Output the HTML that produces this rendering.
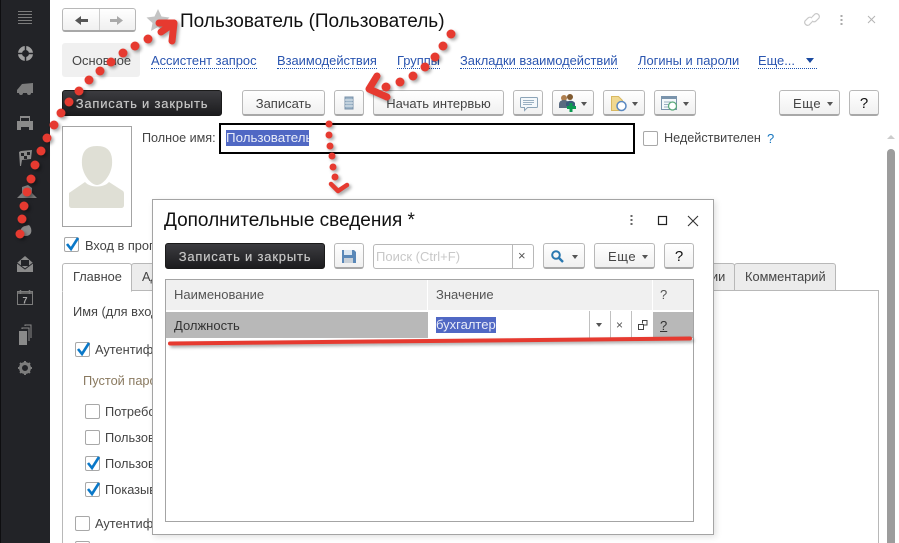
<!DOCTYPE html>
<html lang="ru"><head><meta charset="utf-8"><title>Пользователь</title>
<style>
html,body{margin:0;padding:0;width:899px;height:543px;overflow:hidden;background:#fff}
#w{position:absolute;left:0;top:0;width:899px;height:543px;overflow:hidden;background:#fff;font-family:"Liberation Sans",sans-serif;font-size:12.8px;color:#333}
.a{position:absolute;white-space:nowrap}
.b{position:absolute;box-sizing:border-box;height:26px;top:90px;border:1px solid #b8b8b8;border-bottom:2px solid #a8a8a8;border-radius:3px;background:linear-gradient(#fff,#f0f0f0);text-align:center;line-height:25px;font-size:13px;color:#444;white-space:nowrap}
.e{letter-spacing:.6px}
.d{background:linear-gradient(#3c3c40,#1c1c1e);border:1px solid #1a1a1a;color:#c4c4c4;letter-spacing:.8px;text-shadow:0 0 .5px #bbb}
.l{position:absolute;top:53px;color:#2a55b0;font-size:12.9px;white-space:nowrap;border-bottom:1px dotted #1a50b0;line-height:15px}
.tri{position:absolute;width:0;height:0;border-left:3.5px solid transparent;border-right:3.5px solid transparent;border-top:4px solid #555}
.c{position:absolute;box-sizing:border-box;width:15px;height:15px;border:1px solid #a8a8a8;border-radius:2px;background:#fff}
.t{position:absolute;box-sizing:border-box;top:263px;height:28px;background:#ececec;border:1px solid #b8b8b8;border-radius:3px 3px 0 0;line-height:26px;font-size:12.8px;color:#444;padding-left:10px;white-space:nowrap}
svg{position:absolute;left:0;top:0;overflow:visible}
</style></head><body><div id="w">

<div class="a" style="left:0;top:0;width:50px;height:543px;background:#222327;border-left:1px solid #0e0e10;box-sizing:border-box"></div>
<svg width="50" height="400">
<g stroke="#7c7c7c" stroke-width="1"><path d="M18 11.500h14M18 14.500h14M18 17.500h14M18 20.500h14M18 23.500h14"/></g>
<circle cx="25.500" cy="53.500" r="5.500" fill="none" stroke="#a0a0a0" stroke-width="4"/><path d="M25.500 45v17M17 53.500h17" stroke="#222327" stroke-width="1.500"/>
<path d="M17 90l5-6 11-1v10h-2a2 2 0 0 1-4 0h-4a2 2 0 0 1-4 0h-2z" fill="#7c7c7c"/>
<path d="M20 116h10v5h3v9h-16v-9h3z" fill="#8a8a8a"/><path d="M21 118h8v3h-8z" fill="#222327"/><path d="M21 127h8v3h-8z" fill="#222327"/>
<path d="M19 152l2-1 11-1-1 9-9 1-1 6-1 0z" fill="#8a8a8a"/><path d="M21 153l3 0v3h-3zM27 152l3 0v3h-3zM24 156l3 0v3h-3z" fill="#222327"/>
<path d="M17 198l5-5 0-6 6-2 4 3 0 5 5 5z" fill="#7c7c7c"/>
<path d="M20 233a6 7 0 0 1 5-7l4-1a6 7 0 0 1 2 8a6 5 0 0 1-11 0z" fill="#8a8a8a"/>
<path d="M17 263l8-7 8 7v9h-16z" fill="#8a8a8a"/><path d="M21 260h8v6h-8z" fill="#222327"/><path d="M17 263l8 6 8-6" fill="none" stroke="#222327"/>
<rect x="17.500" y="291.500" width="15" height="13" fill="none" stroke="#7c7c7c"/><path d="M17 293h16M20.500 290v4M29.500 290v4" stroke="#7c7c7c" stroke-width="1.500"/><text x="25" y="303.500" text-anchor="middle" font-family="Liberation Sans" font-weight="bold" font-size="9" fill="#aaa">7</text>
<rect x="19" y="331" width="8" height="14" fill="#8a8a8a"/><path d="M22 329v-1h7v13M25 326v-1h6v13" fill="none" stroke="#8a8a8a"/>
<circle cx="25" cy="368" r="4.500" fill="none" stroke="#7c7c7c" stroke-width="3"/><path d="M25 361v14M18 368h14M20 363l10 10M30 363l-10 10" stroke="#7c7c7c" stroke-width="2" stroke-dasharray="2.500 9"/>
</svg>

<div class="a" style="left:62px;top:8px;width:74px;height:24px;box-sizing:border-box;border:1px solid #b8b8b8;border-bottom:2px solid #a8a8a8;border-radius:3px;background:linear-gradient(#fff,#f0f0f0)"></div>
<div class="a" style="left:99px;top:9px;width:1px;height:21px;background:#ccc"></div>
<svg width="899" height="120">
<path d="M88 20.500h-9" stroke="#555" stroke-width="3"/><path d="M75 20.500l6-4.500v9z" fill="#555"/>
<path d="M110 20.500h9" stroke="#aaa" stroke-width="3"/><path d="M123 20.500l-6-4.500v9z" fill="#aaa"/>
<path d="M158 9l3.500 7.500 8 1-6 5.500 1.500 8-7-4-7 4 1.500-8-6-5.500 8-1z" fill="#c4c4c4"/>
<path d="M812 17l3-3a3 3 0 0 1 4 4l-3 3a3 3 0 0 1-4 0M812 22l-3 3a3 3 0 0 1-4-4l3-3a3 3 0 0 1 4 0" fill="none" stroke="#c8c8c8" stroke-width="1.200"/>
<path d="M841.500 15v2M841.500 19v2M841.500 23v2" stroke="#aaa" stroke-width="2"/>
<path d="M868 16l7 7M875 16l-7 7" stroke="#b4b4b4" stroke-width="1"/>
</svg>
<div class="a" style="left:180px;top:10px;font-size:19px;color:#111;line-height:24px">Пользователь (Пользователь)</div>

<div class="a" style="left:62px;top:43px;width:78px;height:34px;background:#f0f0f0;border-radius:3px"></div>
<div class="a" style="left:72px;top:53px;font-size:12.9px;color:#444;line-height:15px">Основное</div>
<div class="l" style="left:151px">Ассистент запрос</div>
<div class="l" style="left:277px">Взаимодействия</div>
<div class="l" style="left:397px">Группы</div>
<div class="l" style="left:460px">Закладки взаимодействий</div>
<div class="l" style="left:638px">Логины и пароли</div>
<div class="l" style="left:758px;width:59px">Еще...</div>
<div class="tri" style="left:806px;top:58px;border-left-width:4px;border-right-width:4px;border-top:5px solid #1a4aa0"></div>

<div class="b d" style="left:62px;width:160px">Записать и закрыть</div>
<div class="b" style="left:242px;width:83px">Записать</div>
<div class="b" style="left:334px;width:30px"></div>
<div class="b" style="left:373px;width:131px">Начать интервью</div>
<div class="b" style="left:513px;width:30px"></div>
<div class="b" style="left:552px;width:42px"></div>
<div class="b" style="left:603px;width:42px"></div>
<div class="b" style="left:654px;width:42px"></div>
<div class="b e" style="left:779px;width:61px;text-align:left;padding-left:13px">Еще</div>
<div class="b" style="left:849px;width:30px;color:#111;font-size:15px">?</div>
<div class="tri" style="left:581px;top:102px"></div><div class="tri" style="left:632px;top:102px"></div><div class="tri" style="left:683px;top:102px"></div><div class="tri" style="left:827px;top:102px"></div>
<svg width="899" height="120">
<rect x="345" y="97" width="8" height="12" fill="#9cb4c8" stroke="#7890a8"/><path d="M345 100h8M345 103h8M345 106h8" stroke="#e8eef2"/>
<path d="M521.500 97.500h15a1 1 0 0 1 1 1v8a1 1 0 0 1-1 1h-9l-3 3v-3h-3a1 1 0 0 1-1-1v-8a1 1 0 0 1 1-1z" fill="#f4f8fb" stroke="#8ca4b8"/><path d="M523 100.500h11M523 102.500h11M523 104.500h9" stroke="#9ab0c2"/>
<circle cx="564" cy="98" r="3" fill="#b08050"/><path d="M559 108v-4a5 4 0 0 1 10 0v4z" fill="#5a6a80"/><circle cx="570" cy="97" r="3" fill="#805a30"/><path d="M566 106v-3a5 4 0 0 1 9 0v3z" fill="#3a5a7a"/><path d="M571 103v9M567 107.500h9" stroke="#0a9a50" stroke-width="3"/>
<path d="M611.500 96.500h7l4 4v10h-11z" fill="#f0d890" stroke="#d8b860"/><circle cx="621.500" cy="106" r="4.500" fill="#fff" stroke="#5a88c0" stroke-width="1.500"/>
<rect x="661.500" y="96.500" width="15" height="13" fill="#f4f8fb" stroke="#7a94ac"/><rect x="661" y="96" width="16" height="3" fill="#7a94ac"/><path d="M664 102h7M664 104.500h7M664 107h5" stroke="#9ab0c2"/><circle cx="672.500" cy="106" r="4" fill="#fff" stroke="#58a878" stroke-width="1.200"/>
</svg>

<div class="a" style="left:62px;top:126px;width:70px;height:101px;box-sizing:border-box;border:1px solid #a4a4a4"></div>
<svg width="140" height="230">
<path d="M82 165C81 152 86 146 97 146C108 146 113 152 112 165C111 175 103 185 97 185C91 185 83 175 82 165Z" fill="#dfdfd5"/>
<path d="M69 193L85 182C90 188 104 188 109 182L123 191C124 192 124 193 124 195V205C124 207 123 208 121 208H72C70 208 69 207 69 205V195C69 194 69 193 69 193Z" fill="#dfdfd5"/>
</svg>
<div class="a" style="left:142px;top:131px;line-height:15px;color:#444;font-size:12.6px">Полное имя:</div>
<div class="a" style="left:219px;top:123px;width:416px;height:31px;box-sizing:border-box;border:2px solid #000;background:#fff"></div>
<div class="a" style="left:226px;top:130px;width:83px;height:16px;background:#5068c4;color:#e8ecf8;line-height:16px;font-size:13.33px;overflow:hidden">Пользователь</div>
<div class="c" style="left:643px;top:131px"></div>
<div class="a" style="left:664px;top:131px;line-height:15px;color:#444;font-size:12.65px">Недействителен</div>
<div class="a" style="left:767px;top:131px;line-height:15px;color:#1a78c0;font-size:13px">?</div>

<div class="a" style="left:887px;top:149px;width:8px;height:394px;background:#9c9c9c;border-radius:4px 4px 0 0"></div>
<div class="a" style="left:887px;top:135px;width:0;height:0;border-left:4px solid transparent;border-right:4px solid transparent;border-bottom:4px solid #ccc"></div>

<div class="c" style="left:64px;top:237px"></div>
<div class="a" style="left:85px;top:238px;line-height:15px;color:#444">Вход в программу разрешен</div>
<div class="a" style="left:62px;top:290px;width:817px;height:260px;box-sizing:border-box;border:1px solid #b8b8b8;background:#fff"></div>
<div class="t" style="left:131px;width:30px">Ад</div>
<div class="t" style="left:700px;width:35px">ии</div>
<div class="t" style="left:734px;width:102px">Комментарий</div>
<div class="t" style="left:62px;width:70px;background:#fff;border-bottom:1px solid #fff;height:29px">Главное</div>
<div class="a" style="left:73px;top:304px;line-height:15px;color:#444">Имя (для входа)</div>
<div class="c" style="left:75px;top:342px"></div>
<div class="a" style="left:95px;top:342px;line-height:15px;color:#444">Аутентификация</div>
<div class="a" style="left:83px;top:373px;line-height:15px;color:#8a7a60">Пустой пароль</div>
<div class="c" style="left:85px;top:404px"></div><div class="a" style="left:105px;top:404px;line-height:15px;color:#444">Потребовать</div>
<div class="c" style="left:85px;top:430px"></div><div class="a" style="left:105px;top:430px;line-height:15px;color:#444">Пользователь</div>
<div class="c" style="left:85px;top:456px"></div><div class="a" style="left:105px;top:456px;line-height:15px;color:#444">Пользователь</div>
<div class="c" style="left:85px;top:482px"></div><div class="a" style="left:105px;top:482px;line-height:15px;color:#444">Показывать</div>
<div class="c" style="left:75px;top:516px"></div><div class="a" style="left:95px;top:516px;line-height:15px;color:#444">Аутентификация</div>
<div class="c" style="left:75px;top:541px"></div>
<svg width="899" height="543">
<g fill="none" stroke="#0a78c8" stroke-width="2.600">
<path d="M67 244l4 5 7-11"/><path d="M78 349l4 5 7-11"/><path d="M88 463l4 5 7-11"/><path d="M88 489l4 5 7-11"/>
</g>
</svg>

<div class="a" style="left:152px;top:199px;width:562px;height:336px;box-sizing:border-box;border:1px solid #a4a4a4;background:#fff;box-shadow:2px 2px 6px rgba(0,0,0,.12)"></div>
<div class="a" style="left:164px;top:209px;font-size:19px;color:#111;line-height:24px">Дополнительные сведения *</div>
<div class="b d" style="left:165px;top:243px;width:160px">Записать и закрыть</div>
<div class="b" style="left:334px;top:243px;width:30px"></div>
<div class="a" style="left:373px;top:244px;width:161px;height:25px;box-sizing:border-box;border:1px solid #b8b8b8;border-radius:3px;background:#fff"></div>
<div class="a" style="left:376px;top:249px;line-height:15px;color:#c8c8c8;font-size:13px">Поиск (Ctrl+F)</div>
<div class="a" style="left:512px;top:244px;width:1px;height:25px;background:#b8b8b8"></div>
<div class="a" style="left:518px;top:248px;line-height:15px;color:#555;font-size:13px">×</div>
<div class="b" style="left:543px;top:243px;width:42px"></div>
<div class="b e" style="left:594px;top:243px;width:61px;text-align:left;padding-left:13px">Еще</div>
<div class="b" style="left:664px;top:243px;width:30px;color:#111;font-size:15px">?</div>
<svg width="899" height="300">
<path d="M631.500 215v2M631.500 219v2M631.500 223v2" stroke="#666" stroke-width="2"/>
<rect x="658.500" y="216.500" width="8" height="8" fill="none" stroke="#222" stroke-width="1.200"/>
<path d="M688 216l10 10M698 216l-10 10" stroke="#333" stroke-width="1.100"/>
<circle cx="556" cy="255" r="3.800" fill="none" stroke="#2a78b0" stroke-width="2"/><path d="M559 258l4 4" stroke="#2a78b0" stroke-width="2.400"/>
<path d="M342 250h12l2 2v11h-14z" fill="#5a88b8"/><rect x="344" y="250" width="8" height="5" fill="#dde8f2"/><rect x="344" y="258" width="9" height="5" fill="#c8d0d8"/>
</svg>
<div class="tri" style="left:572px;top:255px"></div><div class="tri" style="left:642px;top:255px"></div>

<div class="a" style="left:165px;top:279px;width:529px;height:243px;box-sizing:border-box;border:1px solid #a4a4a4;background:#fff"></div>
<div class="a" style="left:166px;top:280px;width:261px;height:30px;background:#f0f0f0"></div>
<div class="a" style="left:428px;top:280px;width:224px;height:30px;background:#f0f0f0"></div>
<div class="a" style="left:653px;top:280px;width:40px;height:30px;background:#f0f0f0"></div>
<div class="a" style="left:174px;top:287px;line-height:15px;color:#555;font-size:13px">Наименование</div>
<div class="a" style="left:436px;top:287px;line-height:15px;color:#555;font-size:13px">Значение</div>
<div class="a" style="left:660px;top:287px;line-height:15px;color:#555;font-size:13px">?</div>
<div class="a" style="left:166px;top:312px;width:527px;height:26px;background:#b8b8b8"></div>
<div class="a" style="left:174px;top:318px;line-height:15px;color:#333;font-size:13px">Должность</div>
<div class="a" style="left:428px;top:311px;width:225px;height:27px;background:#fff"></div>
<div class="a" style="left:589px;top:311px;width:1px;height:27px;background:#c0c0c0"></div>
<div class="a" style="left:610px;top:311px;width:1px;height:27px;background:#c0c0c0"></div>
<div class="a" style="left:631px;top:311px;width:1px;height:27px;background:#c0c0c0"></div>
<div class="a" style="left:436px;top:317px;width:60px;height:16px;background:#5068c4;color:#e8ecf8;line-height:16px;font-size:13px">бухгалтер</div>
<div class="tri" style="left:596px;top:323px"></div>
<div class="a" style="left:616px;top:318px;line-height:15px;color:#555;font-size:12px">×</div>
<div class="a" style="left:660px;top:318px;line-height:15px;color:#333;font-size:13px;text-decoration:underline">?</div>
<svg width="899" height="340">
<path d="M642.500 323.500v-3h4.500v4.500h-3M638.500 324.500h5v5h-5z" fill="none" stroke="#444"/>
</svg>

<svg width="899" height="543" style="filter:drop-shadow(2px 2px 1.500px rgba(0,0,0,.35))">
<g fill="#e63a30">
<circle cx="69" cy="102" r="4.500"/><circle cx="79" cy="91" r="4.500"/><circle cx="89" cy="80" r="4.500"/><circle cx="100" cy="71" r="4.500"/><circle cx="111" cy="62" r="4.500"/><circle cx="123" cy="53" r="4.500"/><circle cx="135" cy="46" r="4.500"/><circle cx="148" cy="39" r="4.500"/>
<circle cx="61" cy="113" r="4.500"/><circle cx="54" cy="125" r="4.500"/><circle cx="47" cy="138" r="4.500"/><circle cx="41" cy="151" r="4.500"/><circle cx="35" cy="165" r="4.500"/><circle cx="31" cy="179" r="4.500"/><circle cx="27" cy="192" r="4.500"/><circle cx="24" cy="206" r="4.500"/><circle cx="22" cy="219" r="4.500"/><circle cx="20" cy="234" r="4.500"/>
<circle cx="451" cy="34" r="4.500"/><circle cx="443" cy="46" r="4.500"/><circle cx="435" cy="57" r="4.500"/><circle cx="425" cy="67" r="4.500"/><circle cx="413" cy="76" r="4.500"/><circle cx="400" cy="82" r="4.500"/><circle cx="386" cy="87" r="4.500"/>
<circle cx="329" cy="124" r="3.500"/><circle cx="329" cy="135" r="3.500"/><circle cx="330" cy="146" r="3.500"/><circle cx="332" cy="156" r="3.500"/><circle cx="333" cy="167" r="3.500"/><circle cx="335" cy="177" r="3.500"/>
</g>
<g fill="none" stroke="#e63a30" stroke-linecap="round" stroke-linejoin="round">
<path d="M159 23l15 0-2 18M174 23l-13 9" stroke-width="7"/>
<path d="M377 76l-8 13 18 8" stroke-width="7"/>
<path d="M331 184l7 7 9-6" stroke-width="4.500"/>
<path d="M170 343.500C300 343 560 339 690 338.500" stroke-width="4"/>
</g>
</svg>
</div></body></html>
